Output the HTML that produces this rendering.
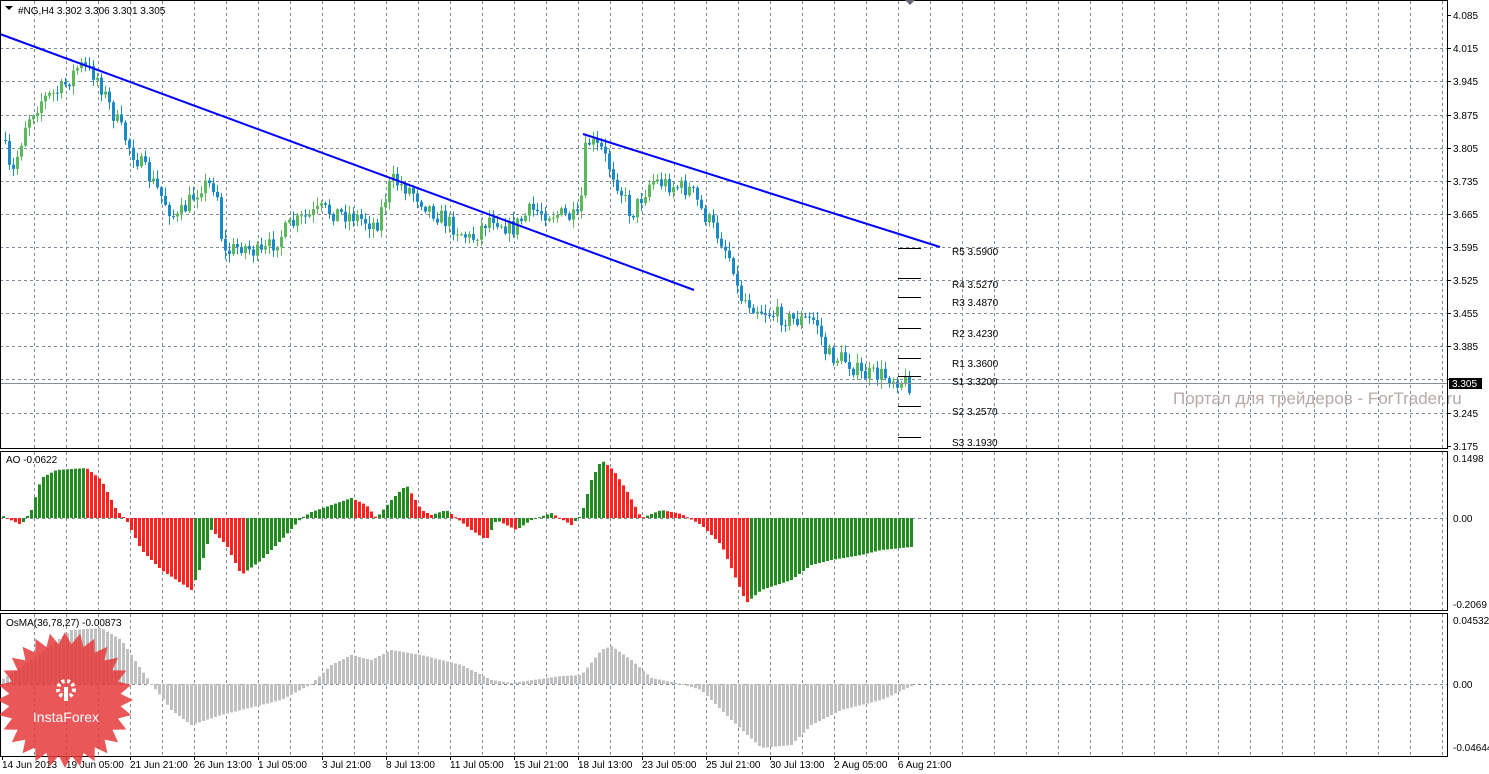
<!DOCTYPE html>
<html><head><meta charset="utf-8"><style>
html,body{margin:0;padding:0;background:#fff;width:1489px;height:774px;overflow:hidden}
svg text{font-family:"Liberation Sans",sans-serif;font-size:10px;fill:#000}
</style></head><body>
<svg id="s" width="1489" height="774" xmlns="http://www.w3.org/2000/svg">
<rect width="1489" height="774" fill="#fff"/>
<g id="grid"></g>
<g id="bars"></g>
<line x1="0" y1="383.5" x2="1447" y2="383.5" stroke="#8090a0" stroke-width="1"/>
<text x="1173" y="404" style="font-size:17px;fill:#b8a8a8">Портал для трейдеров - ForTrader.ru</text>
<line x1="0" y1="34" x2="694" y2="290" stroke="#0000ff" stroke-width="2"/>
<line x1="583" y1="134" x2="940" y2="247" stroke="#0000ff" stroke-width="2"/>
<g id="piv" stroke="#000" stroke-width="1"></g>
<g id="pivt"></g>
<rect x="0.5" y="0.5" width="1447" height="448" fill="none" stroke="#000"/>
<rect x="0.5" y="451.5" width="1447" height="159" fill="none" stroke="#000"/>
<rect x="0.5" y="613.5" width="1447" height="143" fill="none" stroke="#000"/>
<g id="axis"></g>
<g opacity="0.85">
<polygon id="star" fill="#e63a3c"/>
<text x="66" y="722" text-anchor="middle" style="font-size:14px;fill:#fff">InstaForex</text>
<circle cx="66" cy="689" r="8" fill="none" stroke="#fff" stroke-width="4" stroke-dasharray="3 2.5"/>
<rect x="64" y="687" width="4" height="14" fill="#fff"/>
</g>
<polygon points="5,6 13,6 9,10" fill="#000"/>
<text x="18" y="14">#NG,H4  3.302 3.306 3.301 3.305</text>
<text x="6" y="463">AO -0.0622</text>
<text x="6" y="626">OsMA(36,78,27) -0.00873</text>
<polygon points="905,0 915,0 910,5" fill="#667"/>
<rect x="1449" y="378" width="33" height="11" fill="#000"/>
<text x="1452" y="387" style="fill:#fff">3.305</text>
</svg>
<script>
var NS="http://www.w3.org/2000/svg";
function el(p,t,a,txt){var e=document.createElementNS(NS,t);for(var k in a)e.setAttribute(k,a[k]);if(txt!=null)e.textContent=txt;document.getElementById(p).appendChild(e);return e;}
var seed=7;function rnd(){seed=(seed*16807)%2147483647;return seed/2147483647;}
function interp(pts,x){for(var i=1;i<pts.length;i++){if(x<=pts[i][0]){var a=pts[i-1],b=pts[i];var t=(x-a[0])/(b[0]-a[0]);return a[1]+(b[1]-a[1])*t;}}return pts[pts.length-1][1];}
(function(){
for(var x=34;x<1447;x+=32){[[1,448],[452,610],[614,756]].forEach(function(r){el("grid","line",{x1:x+.5,y1:r[0],x2:x+.5,y2:r[1],stroke:"#7a8a9a","stroke-dasharray":"3,3"});});}
var hy=[15,48,81,115,148,181,214,247,280,313,346,379,413,446];
var hl=["4.085","4.015","3.945","3.875","3.805","3.735","3.665","3.595","3.525","3.455","3.385","3.315","3.245","3.175"];
hy.forEach(function(y,i){if(i>0&&i<13)el("grid","line",{x1:0,y1:y+.5,x2:1447,y2:y+.5,stroke:"#7a8a9a","stroke-dasharray":"3,3"});if(i!=11)el("axis","text",{x:1453,y:y+4},hl[i]);el("axis","line",{x1:1447,y1:y+.5,x2:1451,y2:y+.5,stroke:"#000"});});
[[518,"0.00"],[684,"0.00"]].forEach(function(a){el("grid","line",{x1:0,y1:a[0]+.5,x2:1447,y2:a[0]+.5,stroke:"#7a8a9a","stroke-dasharray":"3,3"});el("axis","text",{x:1453,y:a[0]+4},a[1]);});
el("axis","text",{x:1453,y:462},"0.1498");el("axis","text",{x:1453,y:608},"-0.2069");
el("axis","text",{x:1453,y:624},"0.04532");el("axis","text",{x:1453,y:751},"-0.04644");
var tl=["14 Jun 2013","19 Jun 05:00","21 Jun 21:00","26 Jun 13:00","1 Jul 05:00","3 Jul 21:00","8 Jul 13:00","11 Jul 05:00","15 Jul 21:00","18 Jul 13:00","23 Jul 05:00","25 Jul 21:00","30 Jul 13:00","2 Aug 05:00","6 Aug 21:00"];
tl.forEach(function(t,i){var x=2+64*i;el("axis","text",{x:x,y:768},t);el("axis","line",{x1:x+.5,y1:757,x2:x+.5,y2:760,stroke:"#000"});});
var P=[[4,150],[10,180],[25,120],[40,100],[60,90],[78,65],[95,75],[110,110],[130,150],[150,180],[175,220],[200,185],[215,185],[222,255],[240,245],[260,255],[290,225],[320,210],[350,215],[375,225],[390,180],[410,190],[430,210],[450,225],[470,240],[490,215],[510,230],[530,210],[560,215],[578,220],[585,140],[600,150],[615,180],[630,215],[650,180],[670,185],[690,190],[700,210],[720,240],[732,265],[737,295],[760,310],[790,320],[815,320],[825,355],[845,360],[860,375],[880,375],[900,380],[910,385]];
var prev=interp(P,2);
for(var x=4;x<=910;x+=4){var c=interp(P,x)+(rnd()-.5)*18;var o=prev;var tp=Math.min(o,c),bt=Math.max(o,c);var hi=tp-rnd()*8-1,lo=bt+rnd()*8+1;var col=c<o?"#5cb85c":"#1b8ac8";
el("bars","line",{x1:x+1.5,y1:hi,x2:x+1.5,y2:lo,stroke:col});el("bars","rect",{x:x,y:tp,width:3,height:Math.max(1,bt-tp),fill:col});prev=c;}
var A=[[0,515],[5,518],[20,525],[30,510],[40,478],[55,470],[85,468],[100,480],[115,510],[125,520],[140,550],[160,570],[190,590],[200,565],[210,530],[225,545],[240,575],[260,560],[280,540],[300,518],[310,512],[330,505],[350,498],[365,505],[375,518],[390,500],[405,485],[420,510],[430,515],[445,510],[470,530],[485,540],[495,520],[515,530],[530,520],[550,513],[570,525],[580,515],[590,480],[600,460],[612,470],[625,490],[640,518],[660,510],[680,514],[700,525],[720,545],[745,603],[760,590],[790,580],[810,565],[830,560],[860,555],[880,550],[910,547]];
var pv=518;for(var x=2;x<=910;x+=4){var v=interp(A,x);var col=v<pv?"#228b22":"#ff2020";el("bars","rect",{x:x,y:Math.min(v,518),width:3,height:Math.max(1,Math.abs(v-518)),fill:col});pv=v;}
var O=[[0,680],[30,660],[70,630],[100,628],[120,640],[140,670],[150,684],[170,710],[190,725],[220,715],[260,705],[280,700],[310,684],[330,665],[350,655],[370,660],[390,650],[420,655],[460,665],[490,680],[510,683],[560,676],[580,675],[600,650],[610,646],[630,660],[650,678],[680,684],[700,690],[730,720],[760,748],[790,745],[810,725],[840,710],[880,700],[910,686]];
for(var x=2;x<=910;x+=4){var v=interp(O,x);el("bars","rect",{x:x,y:Math.min(v,684),width:3,height:Math.max(1,Math.abs(v-684)),fill:"#c0c0c0"});}
[[248,255,"R5 3.5900"],[278,288,"R4 3.5270"],[297,306,"R3 3.4870"],[328,337,"R2 3.4230"],[358,367,"R1 3.3600"],[376,385,"S1 3.3200"],[406,415,"S2 3.2570"],[437,446,"S3 3.1930"]].forEach(function(p){el("piv","line",{x1:898,y1:p[0]+.5,x2:921,y2:p[0]+.5});el("pivt","text",{x:952,y:p[1]},p[2]);});
var pts=[];for(var i=0;i<56;i++){var a=i*Math.PI/28;var r=i%2?56:68;pts.push((65+r*Math.cos(a)).toFixed(1)+","+(700+r*Math.sin(a)).toFixed(1));}
document.getElementById("star").setAttribute("points",pts.join(" "));
})();
</script>
</body></html>
